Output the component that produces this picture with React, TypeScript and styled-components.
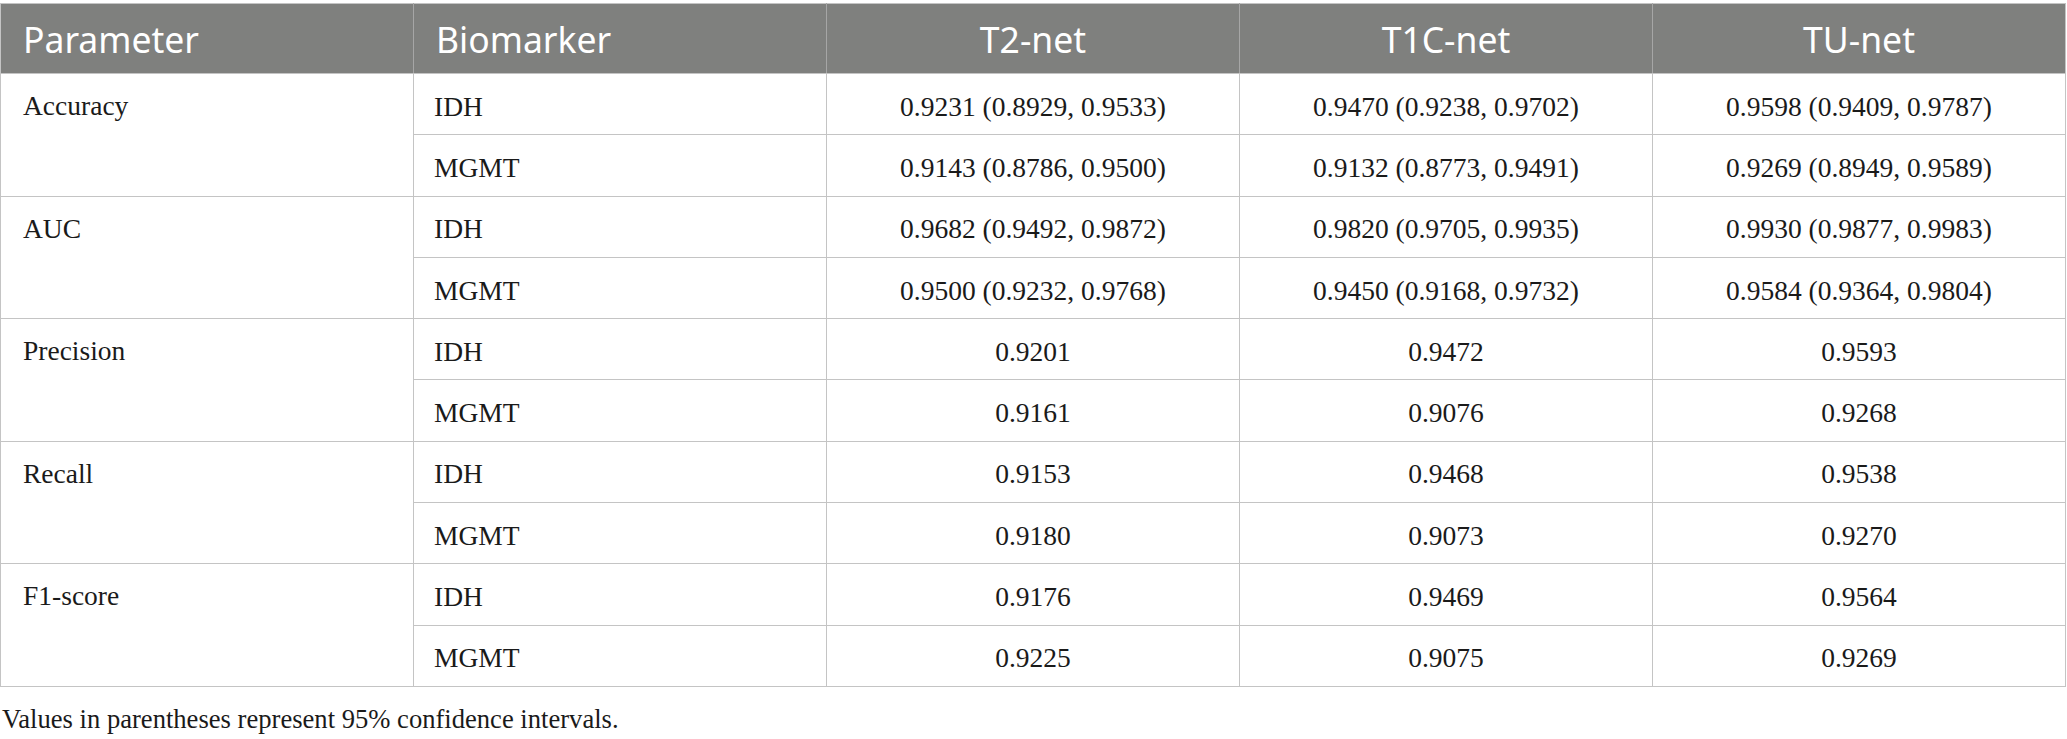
import React from "react";
import styled, { createGlobalStyle } from "styled-components";

const Global = createGlobalStyle`
  html, body { margin: 0; padding: 0; background: #ffffff; }
  body { font-family: "Liberation Serif", "Times New Roman", serif; }
`;

const Wrapper = styled.div`
  padding-top: 3px;
  width: 2067px;
`;

const Table = styled.table`
  width: 2066px;
  border-collapse: collapse;
  table-layout: fixed;
  border: 1px solid #c4c4c4;
`;

const HeadCell = styled.th<{ $align?: "left" | "center" }>`
  background: #7f807e;
  color: #ffffff;
  font-family: "Noto Sans", "Open Sans", sans-serif;
  font-weight: 400;
  font-size: 35.5px;
  height: 70px;
  padding: 1px 22px 0;
  text-align: ${(p) => p.$align ?? "center"};
  border-left: 1px solid #a6a6a6;
  border-bottom: 1px solid #c4c4c4;
  vertical-align: middle;
  box-sizing: border-box;
  &:first-child { border-left: none; }
`;

const Cell = styled.td<{ $align?: "left" | "center" }>`
  font-family: "Liberation Serif", "Times New Roman", serif;
  font-size: 27.5px;
  color: #1a1a1a;
  height: 55.3px;
  padding: 5px 20px 0;
  text-align: ${(p) => p.$align ?? "center"};
  border: 1px solid #c4c4c4;
  vertical-align: middle;
  white-space: nowrap;
`;

const ParamCell = styled(Cell)`
  vertical-align: top;
  padding-left: 22px;
  padding-top: 16px;
`;

const Footnote = styled.p`
  margin: 17px 0 0 2px;
  font-family: "Liberation Serif", "Times New Roman", serif;
  font-size: 26.6px;
  color: #1a1a1a;
`;

type Row = { param: string; rows: { bio: string; vals: string[] }[] };

const data: Row[] = [
  {
    param: "Accuracy",
    rows: [
      { bio: "IDH", vals: ["0.9231 (0.8929, 0.9533)", "0.9470 (0.9238, 0.9702)", "0.9598 (0.9409, 0.9787)"] },
      { bio: "MGMT", vals: ["0.9143 (0.8786, 0.9500)", "0.9132 (0.8773, 0.9491)", "0.9269 (0.8949, 0.9589)"] },
    ],
  },
  {
    param: "AUC",
    rows: [
      { bio: "IDH", vals: ["0.9682 (0.9492, 0.9872)", "0.9820 (0.9705, 0.9935)", "0.9930 (0.9877, 0.9983)"] },
      { bio: "MGMT", vals: ["0.9500 (0.9232, 0.9768)", "0.9450 (0.9168, 0.9732)", "0.9584 (0.9364, 0.9804)"] },
    ],
  },
  {
    param: "Precision",
    rows: [
      { bio: "IDH", vals: ["0.9201", "0.9472", "0.9593"] },
      { bio: "MGMT", vals: ["0.9161", "0.9076", "0.9268"] },
    ],
  },
  {
    param: "Recall",
    rows: [
      { bio: "IDH", vals: ["0.9153", "0.9468", "0.9538"] },
      { bio: "MGMT", vals: ["0.9180", "0.9073", "0.9270"] },
    ],
  },
  {
    param: "F1-score",
    rows: [
      { bio: "IDH", vals: ["0.9176", "0.9469", "0.9564"] },
      { bio: "MGMT", vals: ["0.9225", "0.9075", "0.9269"] },
    ],
  },
];

export default function App() {
  return (
    <Wrapper>
      <Global />
      <Table>
        <thead>
          <tr>
            <HeadCell $align="left">Parameter</HeadCell>
            <HeadCell $align="left">Biomarker</HeadCell>
            <HeadCell>T2-net</HeadCell>
            <HeadCell>T1C-net</HeadCell>
            <HeadCell>TU-net</HeadCell>
          </tr>
        </thead>
        <tbody>
          {data.map((group) =>
            group.rows.map((r, i) => (
              <tr key={group.param + r.bio}>
                {i === 0 && (
                  <ParamCell $align="left" rowSpan={group.rows.length}>
                    {group.param}
                  </ParamCell>
                )}
                <Cell $align="left">{r.bio}</Cell>
                {r.vals.map((v, j) => (
                  <Cell key={j}>{v}</Cell>
                ))}
              </tr>
            ))
          )}
        </tbody>
      </Table>
      <Footnote>Values in parentheses represent 95% confidence intervals.</Footnote>
    </Wrapper>
  );
}
